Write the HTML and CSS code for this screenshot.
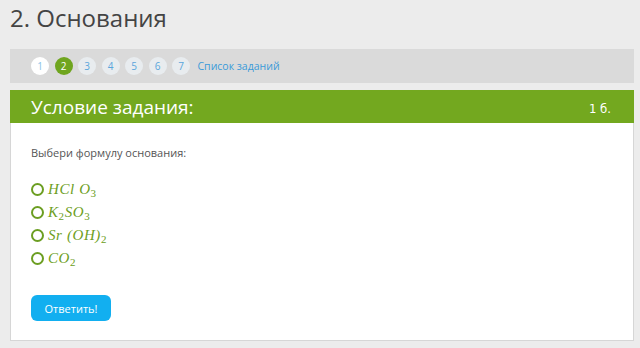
FILE: index.html
```html
<!DOCTYPE html>
<html lang="ru">
<head>
  <meta charset="UTF-8" />
  <title>2. Основания</title>
  <link rel="stylesheet" href="styles.css">
</head>
<body>
  <h1 class="page-title">2. Основания</h1>

  <div class="task-nav">
    <span class="step done">1</span>
    <span class="step current">2</span>
    <span class="step">3</span>
    <span class="step">4</span>
    <span class="step">5</span>
    <span class="step">6</span>
    <span class="step">7</span>
    <a class="task-list" href="#">Список заданий</a>
  </div>

  <div class="task-head">
    <span class="task-head-title">Условие задания:</span>
    <span class="task-points">1 б.</span>
  </div>

  <div class="task-body">
    <p class="question">Выбери формулу основания:</p>

    <ul class="options">
      <li><span class="radio"></span><span class="formula">HCl O<sub>3</sub></span></li>
      <li><span class="radio"></span><span class="formula">K<sub>2</sub>SO<sub>3</sub></span></li>
      <li><span class="radio"></span><span class="formula">Sr (OH)<sub>2</sub></span></li>
      <li><span class="radio"></span><span class="formula">CO<sub>2</sub></span></li>
    </ul>

    <button class="answer-btn">Ответить!</button>
  </div>
</body>
</html>
```

FILE: styles.css
```css
body {
  margin: 0;
  padding: 0 6px 0 10px;
  background-color: #ececec;
  font-family: "Open Sans", Arial, sans-serif;
  color: #444;
}
.page-title {
  margin: 0;
  padding-top: 1px;
  font-size: 24px;
  font-weight: 400;
  line-height: 34px;
  color: #444;
}
.task-nav {
  margin-top: 14px;
  height: 34px;
  background-color: #dadada;
  display: flex;
  align-items: center;
  padding-left: 21px;
  gap: 5.5px;
}
.step {
  width: 18px;
  height: 18px;
  border-radius: 50%;
  background-color: #e8ecef;
  color: #5aa6dc;
  font-size: 10px;
  line-height: 18px;
  text-align: center;
}
.step.done {
  background-color: #fff;
  color: #8cc3e8;
}
.step.current {
  background-color: #6fa51e;
  color: #fff;
}
.task-list {
  margin-left: 2px;
  color: #3b9ad9;
  font-size: 10.5px;
  text-decoration: none;
}
.task-head {
  margin-top: 7px;
  height: 33px;
  background-color: #73a81f;
  color: #fff;
  display: flex;
  align-items: center;
  justify-content: space-between;
  padding: 0 23px 0 21px;
}
.task-head-title {
  font-size: 19px;
}
.task-points {
  padding-top: 3px;
  font-size: 13px;
  font-family: "DejaVu Sans Condensed", "DejaVu Sans", sans-serif;
}
.task-body {
  background-color: #fff;
  border: 1px solid #d6d6d6;
  border-top: none;
  height: 217px;
  padding: 0 20px;
}
.question {
  margin: 0;
  padding-top: 22px;
  font-size: 11px;
  color: #555;
}
.options {
  list-style: none;
  margin: 18px 0 0;
  padding: 0;
}
.options li {
  display: flex;
  align-items: center;
  height: 23px;
}
.radio {
  width: 9px;
  height: 9px;
  border: 2px solid #6c9e22;
  border-radius: 50%;
  margin-right: 4px;
}
.formula {
  font-family: "Liberation Serif", "Times New Roman", serif;
  font-style: italic;
  font-size: 15px;
  letter-spacing: 0.6px;
  color: #6c9e22;
}
.formula sub {
  font-style: normal;
  font-size: 11px;
  vertical-align: -3px;
  line-height: 0;
}
.answer-btn {
  margin-top: 25px;
  width: 80px;
  height: 26px;
  border: none;
  border-radius: 6px;
  background-color: #12aff0;
  color: #fff;
  font-family: "Open Sans", Arial, sans-serif;
  font-size: 11px;
}
```
